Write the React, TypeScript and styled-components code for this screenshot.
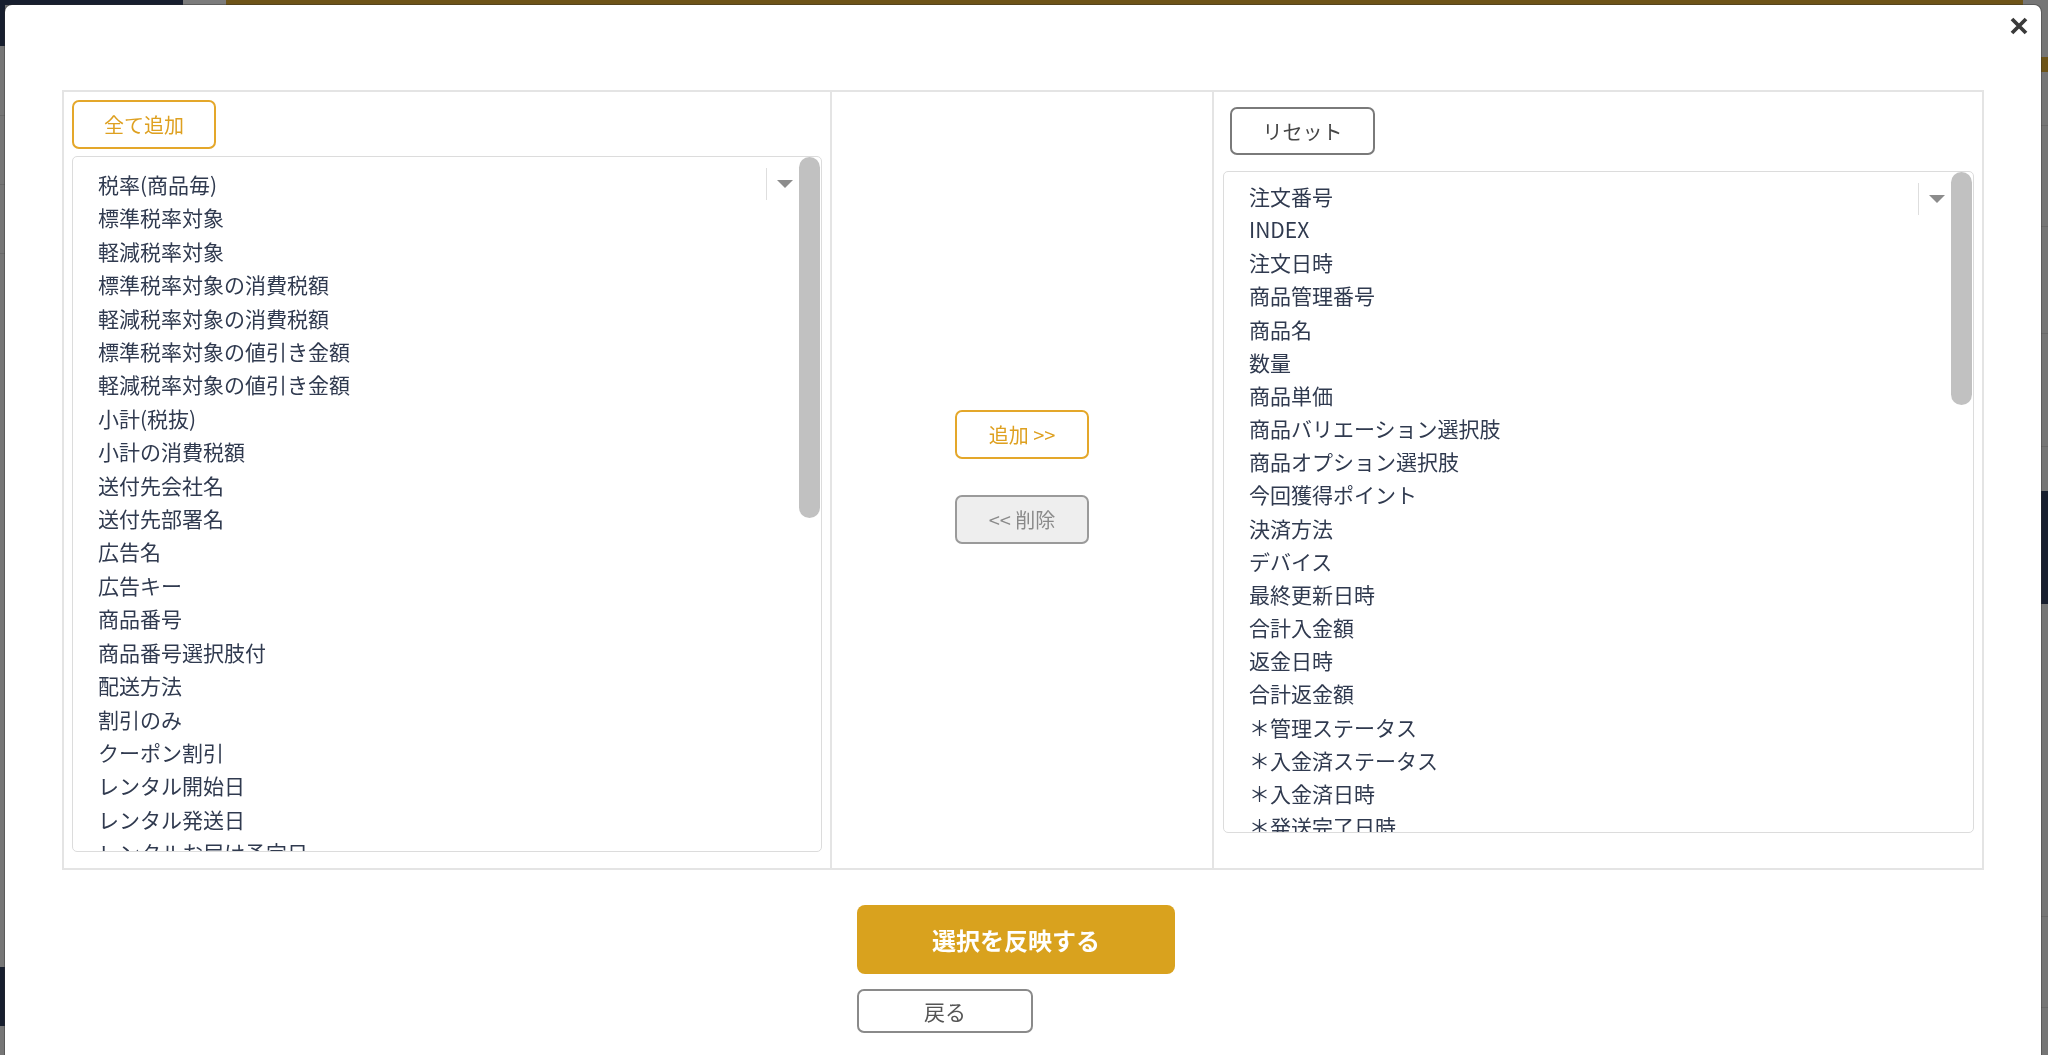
import React from 'react';
import styled, { createGlobalStyle } from 'styled-components';

const GlobalStyle = createGlobalStyle`
  html, body {
    margin: 0;
    padding: 0;
  }
  body {
    background: #767676;
    font-family: 'Noto Sans CJK JP', 'Noto Sans', sans-serif;
    overflow: hidden;
  }
  * {
    box-sizing: border-box;
  }
`;

// page behind the overlay (only its edges show)
const Backdrop = styled.div`
  height: 100vh;
  display: flex;
  flex-direction: column;
`;

const TopStrip = styled.div`
  display: flex;
  height: 5px;
`;

const Seg = styled.div<{ $w?: number; $c: string }>`
  flex: ${(p) => (p.$w ? `0 0 ${p.$w}px` : '1')};
  background: ${(p) => p.$c};
`;

const Rails = styled.div`
  flex: 1;
  display: flex;
  justify-content: space-between;
`;

const Rail = styled.div<{ $w: number }>`
  width: ${(p) => p.$w}px;
  display: flex;
  flex-direction: column;
`;

const RailPiece = styled.div<{ $h?: number; $c: string; $line?: boolean }>`
  flex: ${(p) => (p.$h ? `0 0 ${p.$h}px` : '1')};
  background: ${(p) => p.$c};
  border-bottom: ${(p) => (p.$line ? '1px solid #6a6a6a' : 'none')};
`;

const NAVY = '#171e2e';
const GRAY = '#767676';
const GOLD = '#6e5418';

const leftRail = [
  { h: 41, c: NAVY },
  { h: 70, c: GRAY, line: true },
  { h: 69, c: GRAY, line: true },
  { h: 69, c: GRAY, line: true },
  { h: 713, c: GRAY },
  { h: 59, c: NAVY },
  { c: GRAY },
];

const rightRail = [
  { h: 52, c: GRAY },
  { h: 15, c: GOLD },
  { h: 54, c: GRAY, line: true },
  { h: 101, c: GRAY, line: true },
  { h: 107, c: GRAY, line: true },
  { h: 113, c: GRAY, line: true },
  { h: 44, c: GRAY },
  { h: 113, c: NAVY },
  { h: 313, c: GRAY, line: true },
  { h: 91, c: GRAY, line: true },
  { c: GRAY },
];

// modal
const Modal = styled.div`
  position: fixed;
  top: 5px;
  left: 5px;
  right: 7px;
  bottom: -20px;
  background: #fff;
  border-radius: 7px;
  box-shadow: 0 0 0 1px rgba(40, 40, 40, 0.35);
  padding: 85px 57px 0;
`;

const CloseButton = styled.button`
  position: absolute;
  top: 12px;
  right: 13px;
  width: 18px;
  height: 18px;
  padding: 0;
  border: none;
  background: none;
  cursor: pointer;
  display: flex;
`;

const Picker = styled.div`
  display: grid;
  grid-template-columns: 766px 382px 1fr;
  border: 2px solid #e4e4e4;
`;

const LeftCell = styled.div`
  padding: 8px 8px 16px;
  display: flex;
  flex-direction: column;
  align-items: flex-start;
  gap: 7px;
`;

const MiddleCell = styled.div`
  border-left: 2px solid #e4e4e4;
  display: flex;
  flex-direction: column;
  align-items: center;
  justify-content: center;
  gap: 36px;
  padding-bottom: 6px;
`;

const RightCell = styled.div`
  border-left: 2px solid #e4e4e4;
  padding: 15px 8px 0 9px;
  display: flex;
  flex-direction: column;
  align-items: flex-start;
  gap: 16px;
`;

const OutlineButton = styled.button<{ $tone: 'gold' | 'gray' | 'muted'; $w: number; $h: number; $ml?: number }>`
  width: ${(p) => p.$w}px;
  height: ${(p) => p.$h}px;
  margin-left: ${(p) => p.$ml || 0}px;
  border-radius: 7px;
  font-family: inherit;
  font-size: 20px;
  cursor: pointer;
  background: ${(p) => (p.$tone === 'muted' ? '#eeeeee' : '#fff')};
  color: ${(p) => (p.$tone === 'gold' ? '#dea020' : p.$tone === 'muted' ? '#8a8a8a' : '#454545')};
  border: 2px solid
    ${(p) => (p.$tone === 'gold' ? '#e4a72a' : p.$tone === 'muted' ? '#9a9a9a' : '#7a7a7a')};
`;

const ListBox = styled.div<{ $h: number; $pt: number }>`
  position: relative;
  width: 100%;
  height: ${(p) => p.$h}px;
  border: 1px solid #dcdcdc;
  border-radius: 5px;
  overflow: hidden;
  padding: ${(p) => p.$pt}px 0 0 25px;
`;

const ListItem = styled.div<{ $lh: number }>`
  font-size: 21px;
  line-height: ${(p) => p.$lh}px;
  color: #303a4f;
  white-space: nowrap;
`;

const CaretBox = styled.div`
  position: absolute;
  top: 11px;
  right: 28px;
  height: 32px;
  border-left: 1px solid #dedede;
  padding-left: 10px;
  display: flex;
  align-items: center;
`;

const Caret = styled.span`
  width: 0;
  height: 0;
  border-left: 8px solid transparent;
  border-right: 8px solid transparent;
  border-top: 8px solid #8c8c8c;
`;

const Thumb = styled.div<{ $h: number }>`
  position: absolute;
  top: 0;
  right: 1px;
  width: 21px;
  height: ${(p) => p.$h}px;
  border-radius: 11px;
  background: #c1c1c1;
`;

const Footer = styled.div`
  margin-top: 35px;
  display: flex;
  justify-content: center;
  padding-right: 14px;
`;

const FooterInner = styled.div`
  width: 318px;
  display: flex;
  flex-direction: column;
  align-items: flex-start;
  gap: 15px;
`;

const PrimaryButton = styled.button`
  width: 318px;
  height: 69px;
  border: none;
  border-radius: 8px;
  background: #d9a21e;
  color: #fff;
  font-family: inherit;
  font-size: 24px;
  font-weight: 700;
  cursor: pointer;
`;

const BackButton = styled.button`
  width: 176px;
  height: 44px;
  border: 2px solid #8a8a8a;
  border-radius: 7px;
  background: #fff;
  color: #555;
  font-family: inherit;
  font-size: 21px;
  cursor: pointer;
`;

const available = [
  '税率(商品毎)',
  '標準税率対象',
  '軽減税率対象',
  '標準税率対象の消費税額',
  '軽減税率対象の消費税額',
  '標準税率対象の値引き金額',
  '軽減税率対象の値引き金額',
  '小計(税抜)',
  '小計の消費税額',
  '送付先会社名',
  '送付先部署名',
  '広告名',
  '広告キー',
  '商品番号',
  '商品番号選択肢付',
  '配送方法',
  '割引のみ',
  'クーポン割引',
  'レンタル開始日',
  'レンタル発送日',
  'レンタルお届け予定日',
  'レンタル返却日',
];

const selected = [
  '注文番号',
  'INDEX',
  '注文日時',
  '商品管理番号',
  '商品名',
  '数量',
  '商品単価',
  '商品バリエーション選択肢',
  '商品オプション選択肢',
  '今回獲得ポイント',
  '決済方法',
  'デバイス',
  '最終更新日時',
  '合計入金額',
  '返金日時',
  '合計返金額',
  '＊管理ステータス',
  '＊入金済ステータス',
  '＊入金済日時',
  '＊発送完了日時',
  '＊発送日時',
];

function App() {
  return (
    <>
      <GlobalStyle />
      <Backdrop>
        <TopStrip>
          <Seg $w={183} $c={NAVY} />
          <Seg $w={43} $c="#7c7c7c" />
          <Seg $w={1797} $c={GOLD} />
          <Seg $c={GRAY} />
        </TopStrip>
        <Rails>
          <Rail $w={5}>
            {leftRail.map((r, i) => (
              <RailPiece key={i} $h={r.h} $c={r.c} $line={r.line} />
            ))}
          </Rail>
          <Rail $w={7}>
            {rightRail.map((r, i) => (
              <RailPiece key={i} $h={r.h} $c={r.c} $line={r.line} />
            ))}
          </Rail>
        </Rails>
      </Backdrop>

      <Modal>
        <CloseButton aria-label="閉じる">
          <svg width="18" height="18" viewBox="0 0 18 18">
            <path d="M2 2 L16 16 M16 2 L2 16" stroke="#3a3a3a" strokeWidth="3.8" />
          </svg>
        </CloseButton>

        <Picker>
          <LeftCell>
            <OutlineButton $tone="gold" $w={144} $h={49}>
              全て追加
            </OutlineButton>
            <ListBox $h={696} $pt={11}>
              {available.map((item) => (
                <ListItem key={item} $lh={33.4}>
                  {item}
                </ListItem>
              ))}
              <CaretBox>
                <Caret />
              </CaretBox>
              <Thumb $h={361} />
            </ListBox>
          </LeftCell>

          <MiddleCell>
            <OutlineButton $tone="gold" $w={134} $h={49}>
              追加 &gt;&gt;
            </OutlineButton>
            <OutlineButton $tone="muted" $w={134} $h={49}>
              &lt;&lt; 削除
            </OutlineButton>
          </MiddleCell>

          <RightCell>
            <OutlineButton $tone="gray" $w={145} $h={48} $ml={7}>
              リセット
            </OutlineButton>
            <ListBox $h={662} $pt={8}>
              {selected.map((item) => (
                <ListItem key={item} $lh={33.15}>
                  {item}
                </ListItem>
              ))}
              <CaretBox>
                <Caret />
              </CaretBox>
              <Thumb $h={233} />
            </ListBox>
          </RightCell>
        </Picker>

        <Footer>
          <FooterInner>
            <PrimaryButton>選択を反映する</PrimaryButton>
            <BackButton>戻る</BackButton>
          </FooterInner>
        </Footer>
      </Modal>
    </>
  );
}

export default App;
